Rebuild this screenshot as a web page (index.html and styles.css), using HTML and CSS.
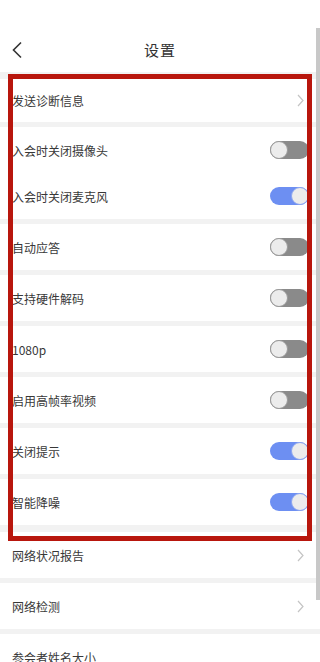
FILE: index.html
```html
<!DOCTYPE html>
<html>

<head>
    <meta charset="utf-8">
    <link rel="stylesheet" href="styles.css">
</head>

<body>
    <div class="screen">
        <div class="status-bar"></div>
        <div class="nav">
            <svg class="back" width="12" height="18" viewBox="0 0 12 18">
                <path d="M10 1.5 L2.5 9 L10 16.5" fill="none" stroke="#333" stroke-width="1.6" />
            </svg>
            <div class="title">设置</div>
        </div>

        <div class="group first">
            <div class="row short">
                <span class="label">发送诊断信息</span>
                <svg class="arrow" width="7" height="13" viewBox="0 0 7 13">
                    <path d="M1 1 L6 6.5 L1 12" fill="none" stroke="#c4c4c4" stroke-width="1.2" />
                </svg>
            </div>
        </div>

        <div class="group">
            <div class="row">
                <span class="label">入会时关闭摄像头</span>
                <span class="switch"></span>
            </div>
            <div class="row">
                <span class="label">入会时关闭麦克风</span>
                <span class="switch on"></span>
            </div>
        </div>

        <div class="group">
            <div class="row">
                <span class="label">自动应答</span>
                <span class="switch"></span>
            </div>
        </div>

        <div class="group">
            <div class="row">
                <span class="label">支持硬件解码</span>
                <span class="switch"></span>
            </div>
        </div>

        <div class="group">
            <div class="row">
                <span class="label">1080p</span>
                <span class="switch"></span>
            </div>
        </div>

        <div class="group">
            <div class="row">
                <span class="label">启用高帧率视频</span>
                <span class="switch"></span>
            </div>
        </div>

        <div class="group">
            <div class="row">
                <span class="label">关闭提示</span>
                <span class="switch on"></span>
            </div>
        </div>

        <div class="group">
            <div class="row">
                <span class="label">智能降噪</span>
                <span class="switch on"></span>
            </div>
        </div>

        <div class="group wide">
            <div class="row">
                <span class="label">网络状况报告</span>
                <svg class="arrow" width="7" height="13" viewBox="0 0 7 13">
                    <path d="M1 1 L6 6.5 L1 12" fill="none" stroke="#c4c4c4" stroke-width="1.2" />
                </svg>
            </div>
        </div>

        <div class="group">
            <div class="row">
                <span class="label">网络检测</span>
                <svg class="arrow" width="7" height="13" viewBox="0 0 7 13">
                    <path d="M1 1 L6 6.5 L1 12" fill="none" stroke="#c4c4c4" stroke-width="1.2" />
                </svg>
            </div>
        </div>

        <div class="group">
            <div class="row">
                <span class="label">参会者姓名大小</span>
            </div>
        </div>

        <!-- annotation frame drawn over the list -->
        <div class="mark"></div>
        <div class="scrollbar"></div>
    </div>
</body>

</html>
```

FILE: styles.css
```css
body {
    margin: 0;
    background: #f2f2f2;
    font-family: 'Noto Sans CJK SC', 'Noto Sans', sans-serif;
    color: #383838;
}

.screen {
    position: relative;
    width: 320px;
    height: 662px;
    overflow: hidden;
    background: #f2f2f2;
}

.status-bar {
    height: 27px;
    background: #fff;
}

.nav {
    position: relative;
    height: 45px;
    background: #fff;
    display: flex;
    align-items: center;
    justify-content: center;
}

.back {
    position: absolute;
    left: 11px;
    top: 14px;
}

.title {
    font-size: 15px;
    color: #333;
    letter-spacing: 1px;
}

.group {
    margin-top: 5px;
    background: #fff;
}

.group.first {
    margin-top: 7px;
}

.group.wide {
    margin-top: 7px;
}

.row {
    height: 46px;
    display: flex;
    align-items: center;
    justify-content: space-between;
    padding: 0 11px 0 12px;
}

.row.short {
    height: 43px;
}

.label {
    font-size: 12px;
}

.arrow {
    margin-right: 5px;
}

.switch {
    position: relative;
    width: 39px;
    height: 18px;
    border-radius: 9px;
    background: #8a8a8a;
}

.switch::after {
    content: '';
    position: absolute;
    left: 0;
    top: 0;
    width: 16px;
    height: 16px;
    border-radius: 50%;
    background: #ececec;
    border: 1px solid #9a9a9a;
}

.switch.on {
    background: #6d8ff2;
}

.switch.on::after {
    left: auto;
    right: 0;
    border-color: #8aa4f0;
}

.mark {
    position: absolute;
    left: 8px;
    top: 74px;
    width: 294px;
    height: 457px;
    border: 5px solid #b8160d;
}

.scrollbar {
    position: absolute;
    right: 0;
    top: 28px;
    width: 4px;
    height: 572px;
    background: #c8c8c8;
}
```
